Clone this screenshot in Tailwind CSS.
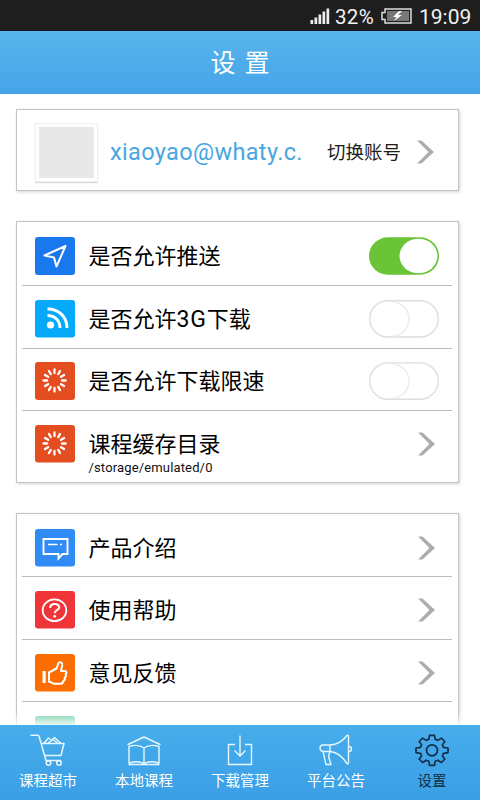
<!DOCTYPE html>
<html lang="zh-CN">
<head>
<meta charset="utf-8">
<title>设置</title>
<script src="https://cdn.jsdelivr.net/npm/@tailwindcss/browser@4"></script>
</head>
<body class="w-[480px] h-[800px] overflow-hidden bg-white font-['Roboto','Noto_Sans_CJK_SC',sans-serif] text-black">
<svg class="hidden">
  <symbol id="chev" viewBox="0 0 18 24"><path d="M1 .5H5.500L18 12 5.500 23.500H1L12.500 12Z" fill="#adadad"/></symbol>
  <symbol id="spin" viewBox="0 0 40 38"><g stroke="#fff" stroke-width="2.300" stroke-linecap="round">
    <path d="M19.500 7.500v3.600M19.500 26v3.600M8.500 18.500h3.600M27 18.500h3.600M14 9l1.800 3.100M23.200 24.900L25 28M25 9l-1.800 3.100M15.800 24.900L14 28M10 13l3.100 1.800M26 22.200l3.100 1.800M29.100 13L26 14.800M13.100 22.200L10 24"/></g></symbol>
</svg>
<div class="h-[800px] flex flex-col">
  <div class="h-[31px] shrink-0 bg-[#1e1e1e] flex items-center justify-end text-[#f2f2f2] pr-[7px] pt-[2px]">
    <svg class="w-[20px] h-[16px] mr-[5px] mb-[2px]" viewBox="0 0 20 16" fill="#eee"><path d="M.5 12h2.700v4H.5zM4.500 9.500h2.700V16H4.500zM8.500 6.500h2.700V16H8.500zM12.500 3.500h2.700V16h-2.700zM16.500 .5h2.700V16h-2.700z"/></svg>
    <span class="text-[20.500px] leading-[28px] w-[46px] tracking-[0.3px] whitespace-nowrap">32%</span>
    <svg class="w-[31px] h-[16px] mr-[7px] mb-[1px]" viewBox="0 0 31 16"><path d="M4 1H30V15H4V11.500H1V4.500H4Z" fill="#222" stroke="#ddd" stroke-width="1.500"/><path d="M6 3H28V13H6Z" fill="#777"/><path d="M18 3l-6 6h3.500L13 13l8-6h-4l4-4z" fill="#fff"/></svg>
    <span class="text-[21px] leading-[28px] w-[54px] whitespace-nowrap">19:09</span>
  </div>
  <header class="h-[63px] shrink-0 bg-linear-to-b from-[#58b5ec] to-[#45a3e9] flex items-center justify-center text-white text-[25px] leading-none gap-[9px] pt-[2px]"><span>设</span><span>置</span></header>

  <main class="h-[631px] shrink-0 overflow-hidden relative pt-[15px] pl-[16px]">
    <section class="w-[443px] h-[82px] border border-[#c4c4c4] shadow-[1px_1px_3px_rgba(0,0,0,0.18)] flex items-center pl-[18px] pt-[4px]">
      <div class="w-[63px] h-[59px] p-[3px] bg-white border border-[#f0f0f0] shadow-[0_1px_1px_rgba(0,0,0,0.15)]"><div class="w-full h-full bg-[#e8e8e8]"></div></div>
      <span class="ml-[12px] w-[217px] text-[23.500px] tracking-[0.350px] leading-[30px] text-[#48a6e2] whitespace-nowrap">xiaoyao@whaty.c.</span>
      <span class="w-[76px] text-[18.500px] leading-[24px] pt-px text-[#1c1c1c] whitespace-nowrap">切换账号</span>
      <svg class="w-[18px] h-[24px] ml-[13px]"><use href="#chev"/></svg>
    </section>

    <section class="mt-[30px] w-[443px] h-[262px] border border-[#c4c4c4] shadow-[1px_1px_3px_rgba(0,0,0,0.18)] pt-px pl-[5px] pr-[6px] text-[22px] leading-[40px]">
      <div class="h-[63px] pt-[14px] pl-[12.500px] flex items-start border-b border-[#bcbcbc]">
        <svg class="w-[40px] h-[38px] mr-[14px]" viewBox="0 0 40 38"><rect width="40" height="38" rx="3" fill="#1a78ee"/><path d="M30.500 9L9.500 18.500 19 20.500 21.500 29.500Z" fill="none" stroke="#fff" stroke-width="2" stroke-linejoin="round"/></svg>
        <span class="flex-1">是否允许推送</span>
        <svg class="w-[70px] h-[38px] mr-[13px]" viewBox="0 0 70 38"><rect y=".3" width="70" height="37.400" rx="19" fill="#6ac436"/><ellipse cx="49.500" cy="19" rx="19" ry="17.300" fill="#fff"/></svg>
      </div>
      <div class="h-[63px] pt-[14px] pl-[12.500px] flex items-start border-b border-[#bcbcbc]">
        <svg class="w-[40px] h-[38px] mr-[14px]" viewBox="0 0 40 38"><rect width="40" height="37.500" rx="3" fill="#04a9fa"/><circle cx="15.500" cy="25" r="3.600" fill="#fff"/><path d="M12.500 15.500C20 15.500 25 20.500 25 28M12.500 9C24 9 32 17 32 28" fill="none" stroke="#fff" stroke-width="2.900"/></svg>
        <span class="flex-1">是否允许<span class="text-[23px] tracking-[0.800px]">3G</span>下载</span>
        <svg class="w-[70px] h-[38px] mr-[13px]" viewBox="0 0 70 38" fill="none" stroke="#dedede" stroke-width="1.400"><rect x=".7" y=".7" width="68.600" height="36.300" rx="18.200"/><path d="M22 1.500C33 2 40 10 40 19S33 36 22 36.500" stroke="#ebebeb"/></svg>
      </div>
      <div class="h-[62px] pt-[13px] pl-[12.500px] flex items-start border-b border-[#bcbcbc]">
        <svg class="w-[40px] h-[38px] mr-[14px]" viewBox="0 0 40 38"><rect width="40" height="38" rx="3" fill="#e34d20"/><use href="#spin"/></svg>
        <span class="flex-1">是否允许下载限速</span>
        <svg class="w-[70px] h-[38px] mr-[13px]" viewBox="0 0 70 38" fill="none" stroke="#dedede" stroke-width="1.400"><rect x=".7" y=".9" width="68.600" height="36.300" rx="18.200"/><path d="M22 1.500C33 2 40 10 40 19S33 36 22 36.500" stroke="#ebebeb"/></svg>
      </div>
      <div class="pt-[14px] pl-[12.500px] flex items-start">
        <svg class="w-[40px] h-[38px] mr-[14px]" viewBox="0 0 40 38"><rect width="40" height="37.500" rx="3" fill="#e34d20"/><use href="#spin"/></svg>
        <div class="flex-1"><div class="h-[34px]">课程缓存目录</div><div class="text-[13px] leading-[17px] tracking-[0.150px] text-[#111]">/storage/emulated/0</div></div>
        <svg class="w-[18px] h-[24px] mt-[7px] mr-[17px]"><use href="#chev"/></svg>
      </div>
    </section>

    <section class="mt-[30px] w-[443px] h-[262px] border border-[#c4c4c4] shadow-[1px_1px_3px_rgba(0,0,0,0.18)] pt-px pl-[5px] pr-[6px] text-[22px] leading-[40px]">
      <div class="h-[62px] pt-[14px] pl-[12.500px] flex items-start border-b border-[#bcbcbc]">
        <svg class="w-[40px] h-[38px] mr-[14px]" viewBox="0 0 40 38"><rect width="40" height="37.500" rx="3" fill="#318bf4"/><path d="M8.500 10H32.500V25H27.500L23.500 29.500V25H8.500Z" fill="none" stroke="#fff" stroke-width="1.900"/><path d="M13 15.500h9.500M25 15.500h2" stroke="#fff" stroke-width="1.700"/></svg>
        <span class="flex-1">产品介绍</span>
        <svg class="w-[18px] h-[24px] mt-[7px] mr-[17px]"><use href="#chev"/></svg>
      </div>
      <div class="h-[63px] pt-[14px] pl-[12.500px] flex items-start border-b border-[#bcbcbc]">
        <svg class="w-[40px] h-[38px] mr-[14px]" viewBox="0 0 40 38"><rect width="40" height="37.500" rx="3" fill="#ef3537"/><ellipse cx="19.500" cy="19.300" rx="11.800" ry="10.900" fill="none" stroke="#fff" stroke-width="1.800"/><path d="M15.200 17C15.200 11.800 24.300 11.800 24.300 16.500C24.300 19.200 19.700 18.800 19.700 22.300" fill="none" stroke="#fff" stroke-width="2"/><circle cx="19.700" cy="25.300" r="1.400" fill="#fff"/></svg>
        <span class="flex-1">使用帮助</span>
        <svg class="w-[18px] h-[24px] mt-[7px] mr-[17px]"><use href="#chev"/></svg>
      </div>
      <div class="h-[62px] pt-[14px] pl-[12.500px] flex items-start border-b border-[#bcbcbc]">
        <svg class="w-[40px] h-[38px] mr-[14px]" viewBox="0 0 40 38"><rect width="40" height="37.500" rx="3" fill="#fd6d02"/><path d="M7.500 17h3.200v12H7.500z" fill="#fff"/><path d="M14 18.500L21.500 14.500L23.500 9C25 7.300 27.500 8.500 27.300 11L26 17H30C31.800 17.200 31.800 19.500 30.500 20.200C31.500 21.500 31 23 29.800 23.500C30.300 25.500 29.500 26.500 28.300 27C28 29 27 29.800 25.500 29.800H19L14 27.500Z" fill="none" stroke="#fff" stroke-width="2" stroke-linejoin="round"/></svg>
        <span class="flex-1">意见反馈</span>
        <svg class="w-[18px] h-[24px] mt-[7px] mr-[17px]"><use href="#chev"/></svg>
      </div>
      <div class="pt-[14px] pl-[12.500px]"><div class="w-[40px] h-[37px] rounded-[3px] bg-[#6fcfa6]"></div></div>
    </section>
    <div class="absolute left-0 bottom-0 w-full h-[14px] bg-linear-to-b from-white/0 to-white/85"></div>
  </main>

  <nav class="h-[75px] shrink-0 bg-linear-to-b from-[#47adeb] to-[#3b9fe6] grid grid-cols-5 text-white text-[14.500px] leading-[18px] text-center">
    <div class="flex flex-col items-center pt-[7px]">
      <svg class="w-[40px] h-[36px] mb-[5px]" viewBox="28 732 40 36" fill="none" stroke="#e6f8ff" stroke-width="1.500" stroke-linejoin="round" stroke-linecap="round"><path d="M31 735.300H37.500Q39 735.300 39.300 737L46 760.500H60.500M41.500 743.500H64L61 755.500H44.500M44 743L48.500 738L51.500 740.500L54.500 737.500L60.500 743M48 743L53 739.500L57 742.500"/><circle cx="48.500" cy="763" r="2.300"/><circle cx="59" cy="763" r="2.300"/></svg>
      <span>课程超市</span>
    </div>
    <div class="flex flex-col items-center pt-[7px]">
      <svg class="w-[40px] h-[36px] mb-[5px]" viewBox="124 732 40 36" fill="none" stroke="#e6f8ff" stroke-width="1.400" stroke-linejoin="round" stroke-linecap="round"><path d="M128 744.500L144 737L160 744.500M144 748C140.500 745 134 745 129 746.500V763C134 761.500 140.500 761.500 144 763.500C147.500 761.500 154 761.500 159 763V746.500C154 745 147.500 745 144 748V763M129 764.500H159"/></svg>
      <span>本地课程</span>
    </div>
    <div class="flex flex-col items-center pt-[7px]">
      <svg class="w-[40px] h-[36px] mb-[5px]" viewBox="220 732 40 36" fill="none" stroke="#e6f8ff" stroke-width="1.400"><path d="M235 744.500H228.500V764.500H251.500V744.500H245M240 735.500V755.500M234.500 750.500L240 756L245.500 750.500"/></svg>
      <span>下载管理</span>
    </div>
    <div class="flex flex-col items-center pt-[7px]">
      <svg class="w-[40px] h-[36px] mb-[5px]" viewBox="316 732 40 36" fill="none" stroke="#e6f8ff" stroke-width="1.400" stroke-linejoin="round"><path d="M330 745H323Q320 745 320 748T323 751.500H330C337 752 342 756 346.500 763C347 764.500 348.500 764 348.500 763V736.500C348.500 735 347 735 346.500 736C342 742 337 744.500 330 745V751.500L328.500 756.500L331 764.500H326L323 751.500M348.500 746.500Q351.500 746.500 351.500 749T348.500 751.700"/></svg>
      <span>平台公告</span>
    </div>
    <div class="flex flex-col items-center pt-[7px] text-[#123049]">
      <svg class="w-[40px] h-[36px] mb-[5px]" viewBox="-20 -18.300 40 36" fill="none" stroke="#123049" stroke-width="1.700" stroke-linejoin="round"><path d="M-3.200-11L-2.500-15H2.500L3.200-11L5.800-9.900L9.300-12.200L12.800-8.800L10.400-5.600L11.500-3L16-2.300V2.300L11.500 3L10.400 5.600L12.800 8.800L9.300 12.200L5.800 9.900L3.200 11L2.500 15H-2.500L-3.200 11L-5.800 9.900L-9.300 12.200L-12.800 8.800L-10.400 5.600L-11.500 3L-16 2.300V-2.300L-11.500-3L-10.400-5.600L-12.800-8.800L-9.300-12.200L-5.800-9.900Z"/><circle r="5.500"/></svg>
      <span>设置</span>
    </div>
  </nav>
</div>
</body>
</html>
